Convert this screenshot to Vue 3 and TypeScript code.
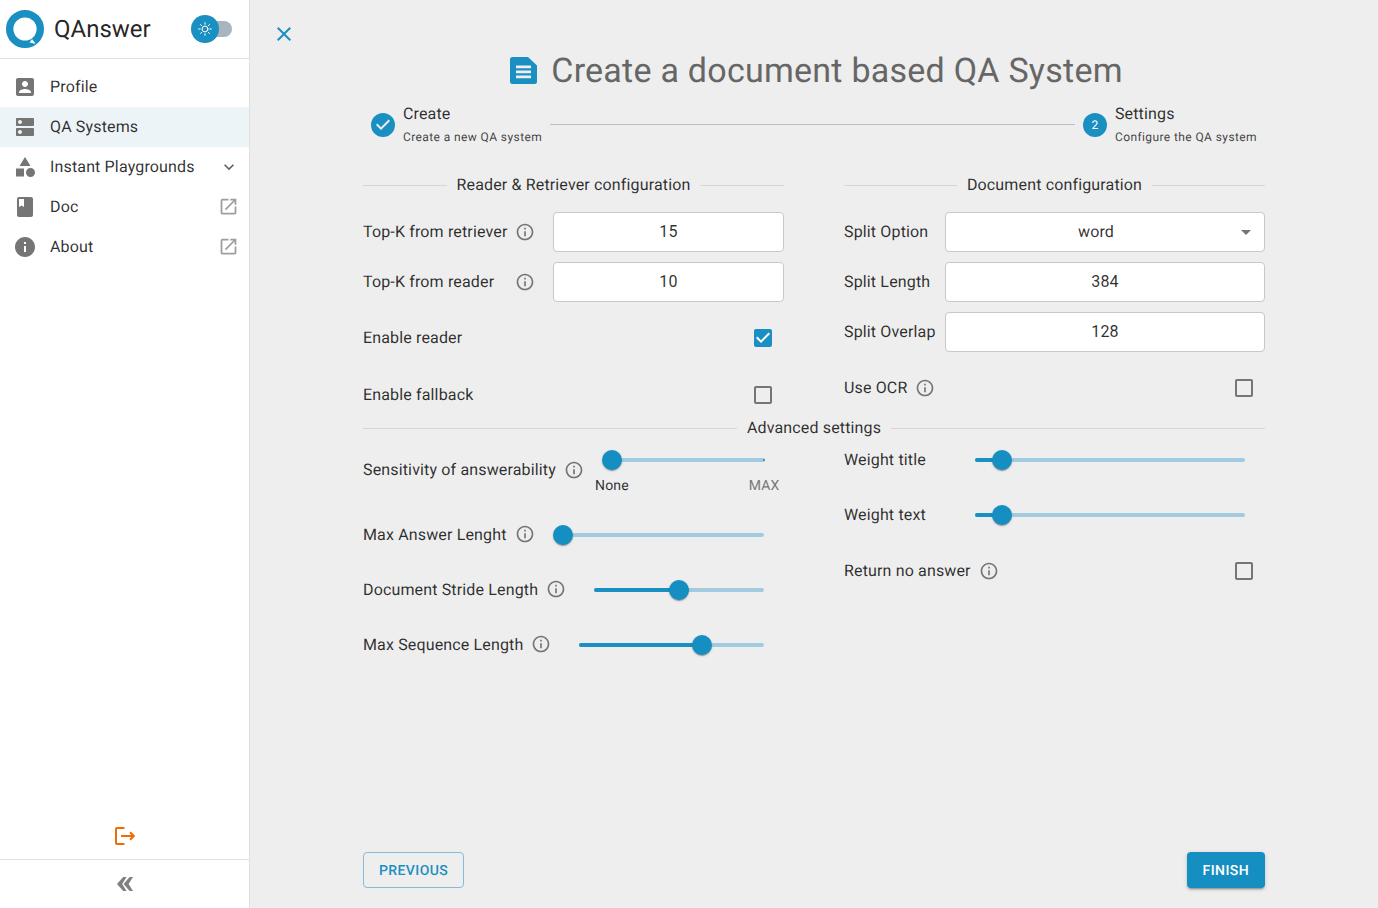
<script setup lang="ts">
const icons: Record<string, string> = {
  profile: 'M3 5v14c0 1.1.89 2 2 2h14c1.1 0 2-.9 2-2V5c0-1.1-.9-2-2-2H5c-1.11 0-2 .9-2 2zm12 4c0 1.66-1.34 3-3 3s-3-1.34-3-3 1.34-3 3-3 3 1.34 3 3zm-9 8c0-2 4-3.1 6-3.1s6 1.1 6 3.1v1H6v-1z',
  dns: 'M20 13H4c-.55 0-1 .45-1 1v6c0 .55.45 1 1 1h16c.55 0 1-.45 1-1v-6c0-.55-.45-1-1-1zM7 19c-1.1 0-2-.9-2-2s.9-2 2-2 2 .9 2 2-.9 2-2 2zM20 3H4c-.55 0-1 .45-1 1v6c0 .55.45 1 1 1h16c.55 0 1-.45 1-1V4c0-.55-.45-1-1-1zM7 9c-1.1 0-2-.9-2-2s.9-2 2-2 2 .9 2 2-.9 2-2 2z',
  category: 'M12 2l-5.5 9h11zM17.5 13a4.5 4.5 0 1 0 0 9 4.5 4.5 0 0 0 0-9zM3 13.5h8v8H3z',
  book: 'M18 2H6c-1.1 0-2 .9-2 2v16c0 1.1.9 2 2 2h12c1.1 0 2-.9 2-2V4c0-1.1-.9-2-2-2zM6 4h5v8l-2.5-1.5L6 12V4z',
  info: 'M12 2C6.48 2 2 6.48 2 12s4.48 10 10 10 10-4.48 10-10S17.52 2 12 2zm1 15h-2v-6h2v6zm0-8h-2V7h2v2z'
}

const infoOutline = 'M11 7h2v2h-2zm0 4h2v6h-2zm1-9C6.48 2 2 6.48 2 12s4.48 10 10 10 10-4.48 10-10S17.52 2 12 2zm0 18c-4.41 0-8-3.59-8-8s3.59-8 8-8 8 3.59 8 8-3.59 8-8 8z'
const boxOutline = 'M19 5v14H5V5h14m0-2H5c-1.1 0-2 .9-2 2v14c0 1.1.9 2 2 2h14c1.1 0 2-.9 2-2V5c0-1.1-.9-2-2-2z'

const menu = [
  { label: 'Profile', icon: 'profile', trail: '' },
  { label: 'QA Systems', icon: 'dns', trail: '', active: true },
  { label: 'Instant Playgrounds', icon: 'category', trail: 'expand' },
  { label: 'Doc', icon: 'book', trail: 'link' },
  { label: 'About', icon: 'info', trail: 'link' }
]

const topK = [
  { label: 'Top-K from retriever', value: '15' },
  { label: 'Top-K from reader', value: '10' }
]

const sliders = [
  { label: 'Max Answer Lenght', pct: 0 },
  { label: 'Document Stride Length', pct: 50 },
  { label: 'Max Sequence Length', pct: 66.5 }
]

const weights = ['Weight title', 'Weight text']
</script>

<template>
  <div class="page">
    <aside class="sidebar">
      <div class="brand">
        <svg class="logo" viewBox="0 0 38 38" width="38" height="38">
          <circle cx="19" cy="19" r="15.3" fill="none" stroke="#1a8fc1" stroke-width="7.4" />
          <path d="M26 29 L29.6 33.8 L23.6 32.6 Z" fill="#fff" />
        </svg>
        <span class="brand-name">QAnswer</span>
        <div class="theme-switch">
          <span class="switch-thumb">
            <svg viewBox="0 0 24 24" width="16" height="16" fill="none" stroke="#fff" stroke-width="1.5" stroke-linecap="round">
              <circle cx="12" cy="12" r="4.4" />
              <path d="M12 2.5v2.4M12 19.1v2.4M2.5 12h2.4M19.1 12h2.4M5.3 5.3L7 7M17 17l1.7 1.7M5.3 18.7L7 17M17 7l1.7-1.7" />
            </svg>
          </span>
        </div>
      </div>

      <nav class="menu">
        <div v-for="item in menu" :key="item.label" class="menu-item" :class="{ active: item.active }">
          <svg class="menu-icon" viewBox="0 0 24 24" width="24" height="24">
            <path fill="currentColor" :d="icons[item.icon]" />
          </svg>
          <span class="menu-label lift">{{ item.label }}</span>
          <svg v-if="item.trail === 'expand'" class="trail expand" viewBox="0 0 24 24" width="20" height="20">
            <path fill="currentColor" d="M16.59 8.59L12 13.17 7.41 8.59 6 10l6 6 6-6z" />
          </svg>
          <svg v-if="item.trail === 'link'" class="trail link" viewBox="0 0 24 24" width="21" height="21">
            <path fill="currentColor" d="M19 19H5V5h7V3H5c-1.11 0-2 .9-2 2v14c0 1.1.89 2 2 2h14c1.1 0 2-.9 2-2v-7h-2v7zM14 3v2h3.59l-9.83 9.83 1.41 1.41L19 6.41V10h2V3h-7z" />
          </svg>
        </div>
      </nav>

      <div class="logout">
        <svg viewBox="0 0 20 18" width="20" height="18" fill="none" stroke="#ef6c00" stroke-width="2">
          <path d="M9.500 1H2a1 1 0 0 0-1 1v14a1 1 0 0 0 1 1h7.500" />
          <path d="M6 9h12.500M15 5.200L18.800 9 15 12.800" />
        </svg>
      </div>
      <div class="collapse">
        <svg viewBox="0 0 16 14" width="16" height="14" fill="#808080">
          <path d="M6.200 0H9.600L5.200 7l4.400 7H6.200L0 7z" />
          <path d="M12.600 0H16L11.600 7l4.400 7h-3.400L6.600 7z" />
        </svg>
      </div>
    </aside>

    <main class="main">
      <div class="close-row">
        <svg viewBox="0 0 24 24" width="24" height="24">
          <path fill="#1a8fc1" d="M19 6.41L17.59 5 12 10.59 6.41 5 5 6.41 10.59 12 5 17.59 6.41 19 12 13.41 17.59 19 19 17.59 13.41 12z" />
        </svg>
      </div>

      <div class="content">
        <h1 class="title">
          <svg viewBox="0 0 27 27" width="27" height="27">
            <path fill="#1a8fc1" fill-rule="evenodd" d="M2.500 0H18L27 8.500V24.500a2.500 2.500 0 0 1-2.500 2.500H2.500A2.500 2.500 0 0 1 0 24.500V2.500A2.500 2.500 0 0 1 2.500 0zM6 8.500V11.200H21V8.500zM6 13.500V16.200H21V13.500zM6 18.500V21.200H21V18.500z" />
          </svg>
          <span class="title-text">Create a document based QA System</span>
        </h1>

        <div class="stepper">
          <div class="step">
            <svg viewBox="0 0 24 24" width="24" height="24">
              <path fill="#1a8fc1" d="M12 0a12 12 0 1 0 0 24A12 12 0 0 0 12 0zm-2 17l-5-5 1.400-1.400 3.600 3.600 7.600-7.600L19 8l-9 9z" />
            </svg>
            <div class="step-text">
              <div class="step-name">Create</div>
              <div class="step-sub">Create a new QA system</div>
            </div>
          </div>
          <div class="step-line"></div>
          <div class="step">
            <span class="step-num">2</span>
            <div class="step-text">
              <div class="step-name">Settings</div>
              <div class="step-sub">Configure the QA system</div>
            </div>
          </div>
        </div>

        <div class="columns top">
          <section>
            <div class="divider"><span>Reader &amp; Retriever configuration</span></div>
            <div class="fields">
              <div v-for="f in topK" :key="f.label" class="field left-field">
                <span class="label-with-info">
                  <span class="lift">{{ f.label }}</span>
                  <svg class="info" viewBox="0 0 24 24" width="20" height="20">
                    <path fill="currentColor" :d="infoOutline" />
                  </svg>
                </span>
                <input class="box" :value="f.value" readonly />
              </div>
            </div>
            <div class="check-row first">
              <span class="lift">Enable reader</span>
              <svg viewBox="0 0 24 24" width="24" height="24">
                <rect x="5" y="5" width="14" height="14" fill="#fff" />
                <path fill="#1a8fc1" d="M19 3H5c-1.110 0-2 .9-2 2v14c0 1.100.890 2 2 2h14c1.100 0 2-.9 2-2V5c0-1.100-.9-2-2-2zm-9 14l-5-5 1.410-1.410L10 14.170l7.590-7.590L19 8l-9 9z" />
              </svg>
            </div>
            <div class="check-row second">
              <span class="lift">Enable fallback</span>
              <svg class="unchecked" viewBox="0 0 24 24" width="24" height="24">
                <path fill="currentColor" :d="boxOutline" />
              </svg>
            </div>
          </section>

          <section>
            <div class="divider"><span>Document configuration</span></div>
            <div class="fields">
              <div class="field right-field">
                <span class="lift">Split Option</span>
                <div class="box select">
                  <span class="select-value lift">word</span>
                  <svg viewBox="0 0 24 24" width="24" height="24">
                    <path fill="#757575" d="M7 10l5 5 5-5z" />
                  </svg>
                </div>
              </div>
              <div class="field right-field">
                <span class="lift">Split Length</span>
                <input class="box" value="384" readonly />
              </div>
              <div class="field right-field">
                <span class="lift">Split Overlap</span>
                <input class="box" value="128" readonly />
              </div>
            </div>
            <div class="check-row first">
              <span class="label-inline">
                <span class="lift">Use OCR</span>
                <svg class="info" viewBox="0 0 24 24" width="20" height="20">
                  <path fill="currentColor" :d="infoOutline" />
                </svg>
              </span>
              <svg class="unchecked" viewBox="0 0 24 24" width="24" height="24">
                <path fill="currentColor" :d="boxOutline" />
              </svg>
            </div>
          </section>
        </div>

        <div class="divider advanced"><span>Advanced settings</span></div>

        <div class="columns">
          <section>
            <div class="slider-row sensitivity">
              <span class="label-inline">
                <span class="lift">Sensitivity of answerability</span>
                <svg class="info" viewBox="0 0 24 24" width="20" height="20">
                  <path fill="currentColor" :d="infoOutline" />
                </svg>
              </span>
              <div class="slider">
                <div class="thumb" style="left: 0%"></div>
                <span class="end-dot"></span>
                <span class="mark none">None</span>
                <span class="mark max">MAX</span>
              </div>
            </div>
            <div v-for="s in sliders" :key="s.label" class="slider-row">
              <span class="label-inline">
                <span>{{ s.label }}</span>
                <svg class="info" viewBox="0 0 24 24" width="20" height="20">
                  <path fill="currentColor" :d="infoOutline" />
                </svg>
              </span>
              <div class="slider">
                <div class="fill" :style="{ width: s.pct + '%' }"></div>
                <div class="thumb" :style="{ left: s.pct + '%' }"></div>
              </div>
            </div>
          </section>

          <section>
            <div v-for="w in weights" :key="w" class="weight-row">
              <span class="weight-label lift">{{ w }}</span>
              <div class="slider">
                <div class="fill" style="width: 10%"></div>
                <div class="thumb" style="left: 10%"></div>
              </div>
            </div>
            <div class="check-row no-answer">
              <span class="label-inline">
                <span class="lift">Return no answer</span>
                <svg class="info" viewBox="0 0 24 24" width="20" height="20">
                  <path fill="currentColor" :d="infoOutline" />
                </svg>
              </span>
              <svg class="unchecked" viewBox="0 0 24 24" width="24" height="24">
                <path fill="currentColor" :d="boxOutline" />
              </svg>
            </div>
          </section>
        </div>

        <div class="actions">
          <button class="btn outlined">Previous</button>
          <button class="btn contained">Finish</button>
        </div>
      </div>
    </main>
  </div>
</template>

<style scoped>
.page {
  display: flex;
  height: 908px;
  font-family: Roboto, sans-serif;
  font-size: 16px;
  letter-spacing: 0.15px;
  color: rgba(0, 0, 0, 0.82);
  background: #eeeeee;
  overflow: hidden;
  text-rendering: geometricPrecision;
}

/* text sits a pixel above the centre of its row */
.lift {
  padding-bottom: 2px;
}

.sidebar {
  width: 249px;
  flex: none;
  display: flex;
  flex-direction: column;
  background: #fff;
  border-right: 1px solid #e0e0e0;
}

.brand {
  height: 58px;
  flex: none;
  display: flex;
  align-items: center;
  padding-left: 6px;
  border-bottom: 1px solid #e0e0e0;
}

.logo {
  flex: none;
}

.brand-name {
  margin-left: 10px;
  font-size: 24px;
  letter-spacing: 0;
  color: rgba(0, 0, 0, 0.87);
}

.theme-switch {
  position: relative;
  width: 28px;
  height: 16px;
  margin-left: 53px;
  border-radius: 8px;
  background: #aab4be;
}

.switch-thumb {
  position: absolute;
  left: -13px;
  top: -6px;
  width: 28px;
  height: 28px;
  display: flex;
  align-items: center;
  justify-content: center;
  border-radius: 50%;
  background: #1a8fc1;
}

.menu {
  padding-top: 8px;
  flex: 1;
}

.menu-item {
  height: 40px;
  display: flex;
  align-items: center;
  padding-left: 13px;
  padding-right: 10px;
}

.menu-item.active {
  background: #edf4f8;
}

.menu-icon {
  color: #757575;
  flex: none;
}

.menu-label {
  margin-left: 13px;
  flex: 1;
}

.trail.expand {
  color: #616161;
}

.trail.link {
  color: #9e9e9e;
  margin-bottom: 2px;
}

.logout {
  height: 50px;
  flex: none;
  box-sizing: border-box;
  display: flex;
  align-items: center;
  justify-content: center;
  border-bottom: 1px solid #e0e0e0;
  padding-top: 3px;
}

.collapse {
  height: 48px;
  flex: none;
  display: flex;
  align-items: center;
  justify-content: center;
}

.main {
  flex: 1;
  display: flex;
  flex-direction: column;
  min-width: 0;
}

.close-row {
  padding: 22px 0 0 22px;
  height: 24px;
  flex: none;
}

.close-row svg {
  display: block;
}

.content {
  flex: 1;
  display: flex;
  flex-direction: column;
  margin: 0 113px;
}

.title {
  margin: 4px 0 0;
  height: 40px;
  display: flex;
  align-items: center;
  justify-content: center;
  gap: 14px;
  padding-left: 5px;
  font-size: 34px;
  font-weight: 400;
  letter-spacing: 0.25px;
  color: #666;
}

.title-text {
  padding-top: 2px;
}

.stepper {
  margin-top: 12px;
  height: 46px;
  display: flex;
  align-items: center;
  padding: 0 8px;
}

.step {
  display: flex;
  align-items: center;
  gap: 8px;
}

.step-num {
  width: 24px;
  height: 24px;
  display: flex;
  align-items: center;
  justify-content: center;
  border-radius: 50%;
  background: #1a8fc1;
  color: #fff;
  font-size: 12px;
}

.step-text {
  display: flex;
  flex-direction: column;
}

.step-name {
  height: 24px;
  line-height: 24px;
}

.step-sub {
  height: 22px;
  line-height: 22px;
  font-size: 12px;
  letter-spacing: 0.4px;
  color: rgba(0, 0, 0, 0.75);
}

.step-line {
  flex: 1;
  height: 1px;
  margin: 0 8px 2px;
  background: #bdbdbd;
}

.columns {
  display: grid;
  grid-template-columns: 421px 421px;
  column-gap: 60px;
}

.columns.top {
  margin-top: 27px;
  height: 243px;
}

.divider {
  display: flex;
  align-items: center;
  gap: 10px;
  height: 20px;
  line-height: 20px;
}

.divider::before,
.divider::after {
  content: '';
  flex: 1;
  height: 1px;
  background: #d6d6d6;
}

.fields {
  display: flex;
  flex-direction: column;
  gap: 10px;
  margin-top: 17px;
}

.field {
  display: grid;
  align-items: center;
  height: 40px;
}

.left-field {
  grid-template-columns: 190px 1fr;
}

.right-field {
  grid-template-columns: 101px 1fr;
}

.label-with-info {
  display: flex;
  align-items: center;
  justify-content: space-between;
  padding-right: 18px;
}

.label-inline {
  display: inline-flex;
  align-items: center;
  gap: 8px;
  white-space: nowrap;
}

.info {
  color: #757575;
  flex: none;
}

.box {
  box-sizing: border-box;
  width: 100%;
  height: 40px;
  border: 1px solid #c8c8c8;
  border-radius: 4px;
  background: #fff;
  font: inherit;
  letter-spacing: inherit;
  color: rgba(0, 0, 0, 0.82);
  text-align: center;
  outline: none;
  padding: 0 14px 2px;
}

.select {
  display: flex;
  align-items: center;
  padding: 0 6px 0 14px;
}

.select-value {
  flex: 1;
  text-align: center;
  padding-right: 2px;
}

.check-row {
  display: flex;
  align-items: center;
  justify-content: space-between;
  height: 40px;
  padding-right: 9px;
}

.check-row.first {
  margin-top: 16px;
}

.check-row.second {
  margin-top: 17px;
}

.check-row.no-answer {
  height: 44px;
  margin-top: 12px;
}

.unchecked {
  color: #757575;
}

.divider.advanced {
  flex: none;
}

.slider-row {
  display: flex;
  align-items: center;
  height: 54px;
  margin-top: 1px;
}

.slider-row.sensitivity {
  height: 56px;
  margin: 4px 0 9px;
}

.slider-row.sensitivity .slider {
  align-self: flex-start;
  margin-top: 8px;
  margin-right: 19px;
}

.slider {
  position: relative;
  flex: 1;
  height: 20px;
  margin: 2px 20px 0 28px;
}

.weight-row .slider {
  margin: 0 20px 0 30px;
}

.slider::before {
  content: '';
  position: absolute;
  left: 0;
  right: 0;
  top: 8px;
  height: 4px;
  border-radius: 2px;
  background: #a3cbdf;
}

.fill {
  position: absolute;
  left: 0;
  top: 8px;
  height: 4px;
  border-radius: 2px;
  background: #1a8fc1;
}

.thumb {
  position: absolute;
  top: 0;
  width: 20px;
  height: 20px;
  margin-left: -10px;
  border-radius: 50%;
  background: #158fc2;
  box-shadow: 0 2px 1px -1px rgba(0, 0, 0, 0.2), 0 1px 1px rgba(0, 0, 0, 0.14), 0 1px 3px rgba(0, 0, 0, 0.12);
}

.end-dot {
  position: absolute;
  right: 0;
  top: 9px;
  width: 2px;
  height: 2px;
  border-radius: 50%;
  background: #1a8fc1;
}

.mark {
  position: absolute;
  top: 26px;
  font-size: 14px;
  line-height: 20px;
  transform: translateX(-50%);
}

.mark.none {
  left: 0;
}

.mark.max {
  left: calc(100% - 1px);
  color: #777;
}

.weight-row {
  display: flex;
  align-items: center;
  height: 44px;
  margin-bottom: 11px;
}

.weight-label {
  width: 101px;
  flex: none;
}

.actions {
  margin-top: auto;
  margin-bottom: 20px;
  display: flex;
  justify-content: space-between;
}

.btn {
  box-sizing: border-box;
  height: 36px;
  padding: 1px 15px 0;
  border-radius: 4px;
  font-family: Roboto, sans-serif;
  font-size: 14px;
  font-weight: 500;
  letter-spacing: 0.4px;
  text-transform: uppercase;
  text-rendering: geometricPrecision;
}

.btn.outlined {
  background: transparent;
  border: 1px solid #85bdd7;
  color: #1a8fc1;
}

.btn.contained {
  background: #158fc2;
  border: none;
  padding: 1px 16px 0;
  color: #fff;
  box-shadow: 0 3px 1px -2px rgba(0, 0, 0, 0.2), 0 2px 2px rgba(0, 0, 0, 0.14), 0 1px 5px rgba(0, 0, 0, 0.12);
}
</style>
